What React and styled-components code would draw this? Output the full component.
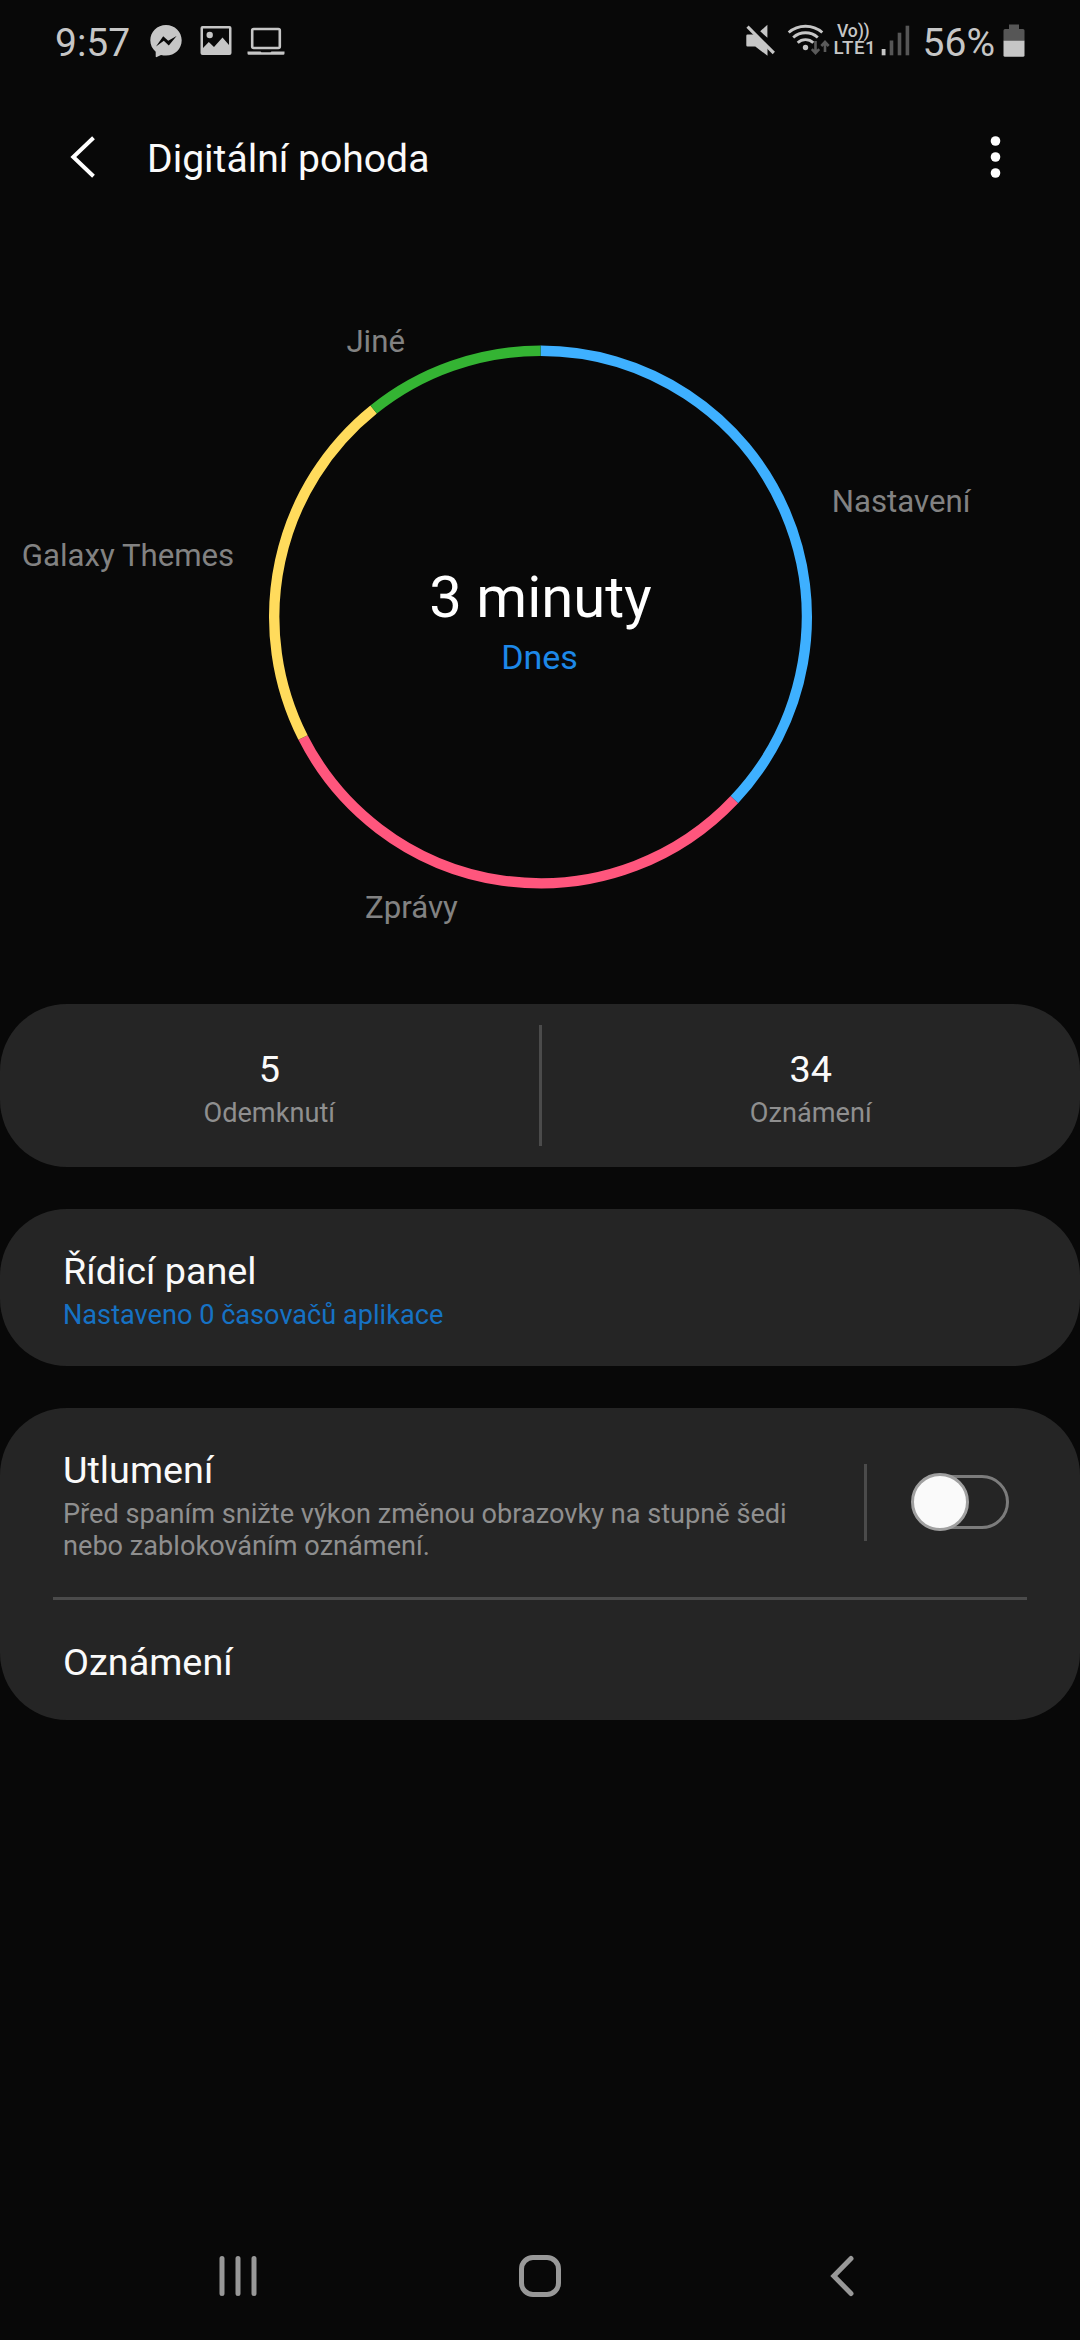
import React from 'react'
import styled, { createGlobalStyle } from 'styled-components'

const GlobalStyle = createGlobalStyle`
  html, body {
    margin: 0;
    padding: 0;
    background: #080808;
  }
  * {
    box-sizing: border-box;
  }
`

const Screen = styled.div`
  display: flex;
  flex-direction: column;
  width: 1080px;
  height: 2340px;
  background: #080808;
  color: #fafafa;
  font-family: Roboto, sans-serif;
  overflow: hidden;
`

const StatusBar = styled.div`
  display: flex;
  align-items: center;
  justify-content: space-between;
  height: 82px;
  padding: 0 55px;
  color: #c6c6c6;
`

const StatusGroup = styled.div`
  display: flex;
  align-items: center;
`

const StatusText = styled.span`
  margin-left: ${props => props.$gap || 0}px;
  padding-top: 3px;
  font-size: 39px;
  line-height: 46px;
`

const StatusIcon = styled.svg`
  display: block;
  height: 34px;
  margin-left: ${props => props.$gap}px;
`

const Volte = styled.div`
  display: flex;
  flex-direction: column;
  width: 40px;
  margin: 0 0 2px 4px;
  font-weight: 500;
`

const VolteLine = styled.span`
  font-size: ${props => props.$size}px;
  letter-spacing: ${props => props.$spacing}px;
  line-height: 17.5px;
  padding-left: ${props => props.$indent}px;
  white-space: nowrap;
`

const Header = styled.header`
  display: flex;
  align-items: center;
  height: 149px;
  padding: 0 79px 0 68px;
`

const Title = styled.h1`
  flex: 1;
  margin: 0 0 0 49px;
  padding-top: 4px;
  font-size: 39.1px;
  font-weight: 400;
  line-height: 46px;
`

const Chart = styled.svg`
  display: block;
  width: 1080px;
  height: 773px;
`

const ChartLabel = styled.text`
  fill: #828282;
  font-size: 31.2px;
`

const Total = styled.text`
  fill: #fff;
  font-size: 58px;
  text-anchor: middle;
`

const Period = styled.text`
  fill: #1d88e8;
  font-size: 34px;
  text-anchor: middle;
`

const Cards = styled.main`
  display: flex;
  flex-direction: column;
  flex: 1;
  gap: 42px;
`

const Card = styled.section`
  background: #252525;
  border-radius: 67px;
`

const Stats = styled(Card)`
  display: grid;
  grid-template-columns: 1fr 3px 1fr;
  align-items: center;
  height: 163px;
`

const Stat = styled.div`
  display: flex;
  flex-direction: column;
  align-items: center;
  gap: 6px;
  padding-top: 5px;
`

const Divider = styled.div`
  width: 3px;
  height: ${props => props.$height}px;
  background: #4b4b4b;
`

const Heading = styled.div`
  font-size: 37.8px;
  line-height: 44px;
`

const Caption = styled.div`
  color: ${props => (props.$link ? '#1672c4' : '#8f8f8f')};
  font-size: 27.15px;
  line-height: 32px;
`

const ListItem = styled.div`
  display: flex;
  align-items: center;
  height: ${props => props.$height}px;
  padding: 0 71px 0 63px;
`

const ItemText = styled.div`
  display: flex;
  flex: 1;
  flex-direction: column;
  gap: 6px;
  margin-right: 42px;
  padding-top: ${props => props.$nudge || 0}px;
`

const Separator = styled.hr`
  height: 3px;
  margin: 0 53px;
  border: 0;
  background: #4b4b4b;
`

const Switch = styled.button`
  position: relative;
  width: 98px;
  height: 58px;
  margin: 0 0 1px 44px;
  padding: 0;
  border: 0;
  background: none;
`

const Track = styled.span`
  position: absolute;
  inset: 2px 0 2px 3px;
  border: 3px solid #7c7c7c;
  border-radius: 27px;
`

const Knob = styled.span`
  position: absolute;
  top: 0;
  left: 0;
  width: 58px;
  height: 58px;
  border: 3px solid #a0a0a0;
  border-radius: 50%;
  background: #fafafa;
`

const NavBar = styled.nav`
  display: grid;
  grid-template-columns: repeat(3, 302px);
  align-items: center;
  justify-content: center;
  justify-items: center;
  height: 128px;
`

const CENTER = { x: 540.5, y: 386 }
const RADIUS = 266.3

const segments = [
  { name: 'Nastavení', color: '#3eb0ff', from: 0, to: 133.3, x: 831.8, y: 281 },
  { name: 'Zprávy', color: '#ff567d', from: 133.3, to: 243.1, x: 365, y: 687 },
  { name: 'Galaxy Themes', color: '#ffdb5c', from: 243.1, to: 321.2, x: 21.8, y: 335 },
  { name: 'Jiné', color: '#34b433', from: 321.2, to: 360, x: 346.4, y: 121 },
]

const point = deg => {
  const rad = (deg * Math.PI) / 180
  return `${CENTER.x + RADIUS * Math.sin(rad)} ${CENTER.y - RADIUS * Math.cos(rad)}`
}

const arc = (from, to) =>
  `M${point(from)} A${RADIUS} ${RADIUS} 0 ${to - from > 180 ? 1 : 0} 1 ${point(to)}`

const StatusIcons = () => (
  <StatusBar>
    <StatusGroup>
      <StatusText>9:57</StatusText>
      <StatusIcon $gap={20} width="32" viewBox="0 0 32 34">
        <path
          fill="currentColor"
          d="M16 1C7.2 1 .3 7.6 .3 16.3c0 4.6 2 8.600 5.400 11.400v4.800c0 .6.6.9 1.100.6l4.200-2.200c1.600.5 3.300.7 5 .7 8.800 0 15.700-6.600 15.700-15.300S24.800 1 16 1z"
        />
        <path fill="#080808" d="M6 22.4l7.2-10.2 5 4.6L26.6 12l-7.800 9.400-5-4.700z" />
      </StatusIcon>
      <StatusIcon $gap={18} width="32" viewBox="0 0 32 34">
        <path
          fill="currentColor"
          fillRule="evenodd"
          d="M2.500 2h27a2 2 0 0 1 2 2v25a2 2 0 0 1-2 2h-27a2 2 0 0 1-2-2V4a2 2 0 0 1 2-2zM3 4.500v19.500l5.800-6 5.200 5 8.500-9.500 6.500 7.500V4.500z"
        />
        <circle cx="9.7" cy="11" r="3.2" fill="currentColor" />
      </StatusIcon>
      <StatusIcon $gap={14.5} width="38" viewBox="0 0 38 34">
        <rect x="5.200" y="5" width="27.6" height="19" rx="1.5" fill="none" stroke="currentColor" strokeWidth="2.6" />
        <path fill="currentColor" d="M.5 27.500h13l1 .8h9l1-.8h13v2a1.200 1.200 0 0 1-1.200 1.200H1.700A1.200 1.200 0 0 1 .5 29.500z" />
      </StatusIcon>
    </StatusGroup>
    <StatusGroup>
      <StatusIcon $gap={0} width="30" viewBox="0 0 30 34">
        <path
          fill="currentColor"
          d="M1.500 10.500h7.500L21.500 22.500v9.300L9.300 22.500H1.500a1.200 1.200 0 0 1-1.200-1.200v-9.600a1.200 1.200 0 0 1 1.200-1.200zM21.400 .8v13l-7.200-6.500z"
        />
        <path stroke="currentColor" strokeWidth="3.2" d="M1.500 2.700l26.300 26.300" />
      </StatusIcon>
      <StatusIcon $gap={11} width="43" viewBox="0 0 43 34">
        <g fill="none" stroke="currentColor" strokeWidth="2.9">
          <path d="M1.700 8.500a25.500 25.500 0 0 1 33.600 0" />
          <path d="M6.200 13.500a18.500 18.500 0 0 1 24.600 0" />
          <path d="M10.700 18.700a11.500 11.500 0 0 1 15.600 0" />
        </g>
        <circle cx="18.5" cy="23.5" r="2.7" fill="currentColor" />
        <g fill="none" stroke="#5a5a5a" strokeWidth="2.6">
          <path d="M28.500 17v12M24.800 25.200l3.700 4 3.700-4" />
          <path d="M38 28V18.500M34.300 22l3.700-4 3.700 4" />
        </g>
      </StatusIcon>
      <Volte>
        <VolteLine $size={17.6} $spacing={-0.2} $indent={3.5}>Vo))</VolteLine>
        <VolteLine $size={18.8} $spacing={0.5} $indent={0}>LTE1</VolteLine>
      </Volte>
      <StatusIcon $gap={7} width="29" viewBox="0 0 29 34">
        <rect x=".7" y="25" width="3.8" height="6.3" fill="currentColor" />
        <g fill="#565656">
          <rect x="8.7" y="16.5" width="3.6" height="14.8" />
          <rect x="16.7" y="8.7" width="3.6" height="22.6" />
          <rect x="24.6" y="1.7" width="3.6" height="29.6" />
        </g>
      </StatusIcon>
      <StatusText $gap={13}>56%</StatusText>
      <StatusIcon $gap={8} width="22" viewBox="0 0 22 34">
        <path fill="#565656" d="M6 .5h10V5h4a1.500 1.500 0 0 1 1.500 1.500V17H.5V6.500A1.500 1.500 0 0 1 2 5h4z" />
        <path fill="currentColor" d="M.5 16.700h21v14.500a1.500 1.500 0 0 1-1.500 1.500H2a1.500 1.500 0 0 1-1.500-1.500z" />
      </StatusIcon>
    </StatusGroup>
  </StatusBar>
)

const App = () => (
  <Screen>
    <GlobalStyle />
    <StatusIcons />
    <Header>
      <svg width="30" height="46" viewBox="0 0 30 46">
        <path d="M25.500 3.800L5.300 23l20.200 19.200" fill="none" stroke="#fff" strokeWidth="4" />
      </svg>
      <Title>Digitální pohoda</Title>
      <svg width="11" height="44" viewBox="0 0 11 44" fill="#fff">
        <circle cx="5.5" cy="6" r="4.8" />
        <circle cx="5.5" cy="22" r="4.8" />
        <circle cx="5.5" cy="38" r="4.8" />
      </svg>
    </Header>

    <Chart viewBox="0 0 1080 773">
      {segments.map(s => (
        <path key={s.name} d={arc(s.from, s.to)} fill="none" stroke={s.color} strokeWidth="10.4" />
      ))}
      {segments.map(s => (
        <ChartLabel key={s.name} x={s.x} y={s.y}>{s.name}</ChartLabel>
      ))}
      <Total x="540.5" y="385.5">3 minuty</Total>
      <Period x="539.5" y="438">Dnes</Period>
    </Chart>

    <Cards>
      <Stats>
        <Stat>
          <Heading>5</Heading>
          <Caption>Odemknutí</Caption>
        </Stat>
        <Divider $height={121} />
        <Stat>
          <Heading>34</Heading>
          <Caption>Oznámení</Caption>
        </Stat>
      </Stats>

      <Card>
        <ListItem $height={157}>
          <ItemText $nudge={5}>
            <Heading>Řídicí panel</Heading>
            <Caption $link>Nastaveno 0 časovačů aplikace</Caption>
          </ItemText>
        </ListItem>
      </Card>

      <Card>
        <ListItem $height={189}>
          <ItemText $nudge={5}>
            <Heading>Utlumení</Heading>
            <Caption>
              Před spaním snižte výkon změnou obrazovky na stupně šedi nebo zablokováním oznámení.
            </Caption>
          </ItemText>
          <Divider $height={77} />
          <Switch role="switch" aria-checked="false">
            <Track />
            <Knob />
          </Switch>
        </ListItem>
        <Separator />
        <ListItem $height={120}>
          <ItemText $nudge={4}>
            <Heading>Oznámení</Heading>
          </ItemText>
        </ListItem>
      </Card>
    </Cards>

    <NavBar>
      <svg width="38" height="42" viewBox="0 0 38 42" stroke="#989898" strokeWidth="5" strokeLinecap="round">
        <path d="M3 3.500v35M19 3.500v35M35 3.500v35" />
      </svg>
      <svg width="42" height="42" viewBox="0 0 42 42">
        <rect x="2.5" y="2.5" width="37" height="37" rx="11.5" fill="none" stroke="#989898" strokeWidth="5" />
      </svg>
      <svg width="24" height="42" viewBox="0 0 24 42">
        <path d="M21 3.500L3.800 21 21 38.500" fill="none" stroke="#989898" strokeWidth="5" strokeLinecap="round" />
      </svg>
    </NavBar>
  </Screen>
)

export default App
